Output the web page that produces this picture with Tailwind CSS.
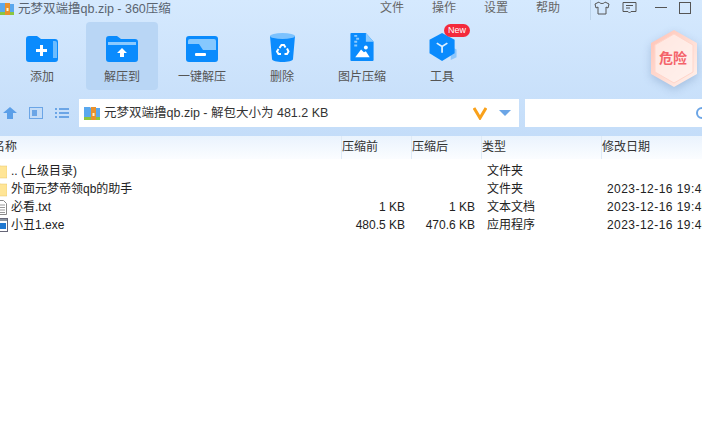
<!DOCTYPE html>
<html lang="zh">
<head>
<meta charset="utf-8">
<script src="https://cdn.jsdelivr.net/npm/@tailwindcss/browser@4"></script>
</head>
<body class="m-0 bg-white">
<div class="w-[702px] h-[433px] overflow-hidden bg-white flex flex-col font-['Liberation_Sans','Noto_Sans_CJK_SC',sans-serif] text-[12px] text-[#222]">
  <div class="h-[136px] shrink-0 bg-gradient-to-b from-[#d5e9fe] to-[#c4ddf9] flex flex-col">
    <div class="h-[20px] flex items-start">
      <svg class="ml-[-1px] mt-[1px] shrink-0" width="15" height="15" viewBox="0 0 15 15"><path d="M0 2h6l1 1h8v9H0z" fill="#5aa8ee"/><rect x="0" y="11" width="15" height="3" fill="#8cc63f"/><rect x="6" y="2" width="5" height="12" fill="#e8912d"/><rect x="7.5" y="7" width="2" height="3" fill="#fff3c8"/></svg>
      <div class="ml-[4px] mt-[1px] text-[12.5px] leading-[17px] text-[#5a6470] w-[362px] whitespace-nowrap">元梦双端撸qb.zip - 360压缩</div>
      <div class="flex gap-[28px] text-[12px] leading-[14px] text-[#666] mt-[1px]">
        <span>文件</span><span>操作</span><span>设置</span><span>帮助</span>
      </div>
      <div class="ml-[30px] w-px h-[20px] bg-[#bcd3ea]"></div>
      <svg class="ml-[3px] mt-[1px]" width="16" height="14" viewBox="0 0 16 14" fill="none" stroke="#555" stroke-width="1"><path d="M5 1 1 3l1 4 2-1v7h8V6l2 1 1-4-4-2c-1 2-5 2-6 0z"/></svg>
      <svg class="ml-[12px] mt-[1px]" width="15" height="14" viewBox="0 0 15 14" fill="none" stroke="#555" stroke-width="1"><path d="M1 1.500h13v9H9l-1.500 1.500L6 10.500H1z"/><path d="M4 4.500h7M4 7h4"/></svg>
      <div class="ml-[18px] mt-[7px] w-[12px] h-px bg-[#555]"></div>
      <div class="ml-[12px] mt-[2px] w-[12px] h-[12px] border border-[#555]"></div>
    </div>
    <div class="h-[77px] flex items-start mt-[2px] ml-[6px] gap-[8px] relative">
      <div class="w-[72px] h-[68px] rounded-[4px] flex flex-col items-center text-[#555]">
        <svg class="mt-[14px]" width="32" height="26" viewBox="0 0 32 26"><path d="M3 0h8l4 3h14a3 3 0 0 1 3 3v17a3 3 0 0 1-3 3H3a3 3 0 0 1-3-3V3a3 3 0 0 1 3-3z" fill="#0a8bfd"/><path d="M27 5h2a2 2 0 0 1 2 2v15h-4z" fill="#6cbcfe"/><path d="M14 9h3v4h4v3h-4v4h-3v-4h-4v-3h4z" fill="#fff"/></svg>
        <span class="mt-[7px] leading-[16px]">添加</span>
      </div>
      <div class="w-[72px] h-[68px] rounded-[4px] bg-[#b9d6f5] flex flex-col items-center text-[#555]">
        <svg class="mt-[14px]" width="32" height="26" viewBox="0 0 32 26"><path d="M3 0h8l4 3h14a3 3 0 0 1 3 3v17a3 3 0 0 1-3 3H3a3 3 0 0 1-3-3V3a3 3 0 0 1 3-3z" fill="#0a8bfd"/><rect x="2" y="6" width="28" height="3" fill="#8ccafe"/><path d="M16 12l5 5h-3v4h-4v-4h-3z" fill="#fff"/></svg>
        <span class="mt-[7px] leading-[16px]">解压到</span>
      </div>
      <div class="w-[72px] h-[68px] rounded-[4px] flex flex-col items-center text-[#555]">
        <svg class="mt-[14px]" width="32" height="26" viewBox="0 0 32 26"><path d="M3 0h26a3 3 0 0 1 3 3v20a3 3 0 0 1-3 3H3a3 3 0 0 1-3-3V3a3 3 0 0 1 3-3z" fill="#0a8bfd"/><path d="M4 3h24a2 2 0 0 1 2 2v9H17l-4-6H2V5a2 2 0 0 1 2-2z" fill="#86c8fe"/><rect x="9" y="17" width="11" height="3" rx="1" fill="#fff"/></svg>
        <span class="mt-[7px] leading-[16px] whitespace-nowrap">一键解压</span>
      </div>
      <div class="w-[72px] h-[68px] rounded-[4px] flex flex-col items-center text-[#555]">
        <svg class="mt-[11px]" width="25" height="29" viewBox="0 0 25 29"><path d="M0 3h25l-2 23c0 2-5 3-10.500 3S2 28 2 26z" fill="#0a8bfd"/><ellipse cx="12.500" cy="3" rx="12.500" ry="3" fill="#7cc2fe"/><g fill="none" stroke="#fff" stroke-width="2"><path d="M9.500 15l2-3h2.500l1.500 2.500"/><path d="M17 15.500l1.500 3-1.500 2.500h-2.500"/><path d="M11 21H8.500L7 18.500l1.500-2.500"/></g></svg>
        <span class="mt-[7px] leading-[16px]">删除</span>
      </div>
      <div class="w-[72px] h-[68px] rounded-[4px] flex flex-col items-center text-[#555]">
        <svg class="mt-[11px]" width="24" height="28" viewBox="0 0 24 29"><path d="M1 0h15l8 9v19a1 1 0 0 1-1 1H1a1 1 0 0 1-1-1V1a1 1 0 0 1 1-1z" fill="#0a8bfd"/><path d="M16 0l8 9h-8z" fill="#8ccafe"/><path d="M4 2h3v2H4zM6 5h3v2H6zM4 8h3v2H4zM4 12h3v2H4z" fill="#8ccafe"/><path d="M5 25l6-8 3 3 2-1 4 6z" fill="#fff"/><circle cx="16" cy="15" r="2" fill="#fff"/></svg>
        <span class="mt-[8px] leading-[16px] whitespace-nowrap">图片压缩</span>
      </div>
      <div class="w-[72px] h-[68px] rounded-[4px] flex flex-col items-center text-[#555] relative">
        <svg class="mt-[11px] ml-[3px]" width="30" height="28" viewBox="0 0 30 29"><path d="M22 14l6 3v8l-6 3z" fill="#8cc6fb"/><path d="M13 0l13 7v14l-13 8-13-8V7z" fill="#0a8bfd"/><path d="M7.500 10.500l5.500 3.500 5.500-3.500M13 14v6.500" stroke="#dff0ff" stroke-width="1.800" fill="none"/></svg>
        <span class="mt-[8px] leading-[16px]">工具</span>
        <span class="absolute left-[38px] top-[2px] w-[26px] h-[13px] rounded-full bg-[#f42a3c] text-white text-[9px] leading-[13px] text-center font-['Liberation_Sans']">New</span>
      </div>
      <svg class="absolute left-[645px] top-[8px] drop-shadow-[0_3px_4px_rgba(120,150,190,0.45)]" width="46" height="58" viewBox="0 0 46 58"><defs><linearGradient id="s" x1="0" y1="0" x2="1" y2="1"><stop offset="0" stop-color="#ffc2b4"/><stop offset="1" stop-color="#fff3ee"/></linearGradient></defs><path d="M23 0l23 13v31L23 57 0 44V13z" fill="url(#s)"/><path d="M23 4l19 11v27L23 53 4 42V15z" fill="#fff2ee" fill-opacity=".75" stroke="#ffd6cb"/></svg>
      <span class="absolute left-[653px] top-[26px] text-[14px] leading-[20px] text-[#f4636a] font-bold">危险</span>
    </div>
    <div class="h-[28px] flex items-center">
      <svg class="ml-[3px] shrink-0" width="14" height="12" viewBox="0 0 14 12"><path d="M7 0l7 6h-4v6H4V6H0z" fill="#5b9fe8"/></svg>
      <svg class="ml-[12px] shrink-0" width="14" height="12" viewBox="0 0 14 12"><rect x=".5" y=".5" width="13" height="11" fill="#c4dcf7" stroke="#6ba5e6"/><rect x="3" y="3" width="5" height="6" fill="#6ba5e6"/></svg>
      <svg class="ml-[12px] shrink-0" width="14" height="10" viewBox="0 0 14 10" fill="#6ba5e6"><path d="M0 0h2v2H0zM4 0h10v2H4zM0 4h2v2H0zM4 4h10v2H4zM0 8h2v2H0zM4 8h10v2H4z"/></svg>
      <div class="ml-[10px] w-[440px] h-[28px] bg-white flex items-center relative">
        <svg class="ml-[5px] shrink-0" width="16" height="15" viewBox="0 0 16 15"><path d="M0 1h6l1 1h9v10H0z" fill="#5aa8ee"/><rect x="0" y="11" width="16" height="3" fill="#8cc63f"/><rect x="7" y="1" width="5" height="13" fill="#e8912d"/><rect x="8.500" y="7" width="2" height="3" fill="#fff3c8"/></svg>
        <span class="ml-[4px] text-[12.500px] text-[#333] whitespace-nowrap">元梦双端撸qb.zip - 解包大小为 481.2 KB</span>
        <svg class="absolute left-[394px] top-[8px]" width="14" height="13" viewBox="0 0 14 13"><path d="M1 1l6 10 6-10" fill="none" stroke="#f9a11b" stroke-width="3"/></svg>
        <svg class="absolute left-[420px] top-[11px]" width="12" height="6" viewBox="0 0 12 6"><path d="M0 0h12L6 6z" fill="#6ba5e6"/></svg>
      </div>
      <div class="ml-[6px] flex-1 h-[28px] bg-white relative">
        <svg class="absolute left-[170px] top-[7px]" width="14" height="14" viewBox="0 0 14 14"><circle cx="7" cy="7" r="5" fill="none" stroke="#6ba5e6" stroke-width="2"/></svg>
      </div>
    </div>
  </div>
  <div class="h-[23px] shrink-0 bg-gradient-to-b from-[#eaf3fd] to-[#fbfdff] flex items-stretch text-[12px] leading-[23px] text-[#333]">
    <span class="ml-[-7px] w-[348px] shrink-0">名称</span>
    <span class="w-[70px] shrink-0 border-l border-[#dfeaf6]">压缩前</span>
    <span class="w-[70px] shrink-0 border-l border-[#dfeaf6]">压缩后</span>
    <span class="w-[120px] shrink-0 border-l border-[#dfeaf6]">类型</span>
    <span class="flex-1 border-l border-[#dfeaf6]">修改日期</span>
  </div>
  <div class="mt-[3px] flex flex-col text-[12px] leading-[18px] text-[#222]">
    <div class="h-[18px] flex items-center">
      <svg class="ml-[-7px] shrink-0" width="14" height="16" viewBox="0 0 14 16"><path d="M0 1h6l1 2h7v12H0z" fill="#ffe596" stroke="#e6c468" stroke-width=".5"/></svg>
      <span class="ml-[4px] w-[328px] shrink-0 whitespace-nowrap">.. (上级目录)</span>
      <span class="w-[66px] shrink-0"></span><span class="w-[70px] shrink-0"></span>
      <span class="ml-[12px] w-[120px] shrink-0">文件夹</span>
    </div>
    <div class="h-[18px] flex items-center">
      <svg class="ml-[-7px] shrink-0" width="14" height="16" viewBox="0 0 14 16"><path d="M0 1h6l1 2h7v12H0z" fill="#ffe596" stroke="#e6c468" stroke-width=".5"/></svg>
      <span class="ml-[4px] w-[328px] shrink-0 whitespace-nowrap">外面元梦帝领qb的助手</span>
      <span class="w-[66px] shrink-0"></span><span class="w-[70px] shrink-0"></span>
      <span class="ml-[12px] w-[120px] shrink-0">文件夹</span><span class="shrink-0 whitespace-nowrap tracking-[0.45px]">2023-12-16 19:40</span>
    </div>
    <div class="h-[18px] flex items-center">
      <svg class="ml-[-4px] shrink-0" width="11" height="15" viewBox="0 0 11 15"><path d="M.5.500h7l3 3v11H.5z" fill="#fff" stroke="#888"/><path d="M2 5h7M2 7.500h7M2 10h7M2 12.500h7" stroke="#999"/></svg>
      <span class="ml-[4px] w-[328px] shrink-0 whitespace-nowrap">必看.txt</span>
      <span class="w-[66px] shrink-0 text-right whitespace-nowrap">1 KB</span><span class="w-[70px] shrink-0 text-right whitespace-nowrap">1 KB</span>
      <span class="ml-[12px] w-[120px] shrink-0">文本文档</span><span class="shrink-0 whitespace-nowrap tracking-[0.45px]">2023-12-16 19:40</span>
    </div>
    <div class="h-[18px] flex items-center">
      <svg class="ml-[-8px] shrink-0" width="16" height="14" viewBox="0 0 16 14"><rect x=".5" y=".5" width="15" height="13" fill="#fff" stroke="#667"/><rect x="1" y="1" width="14" height="2" fill="#8a94a0"/><rect x="8" y="5" width="6" height="6" fill="#1f78d1"/></svg>
      <span class="ml-[3px] w-[328px] shrink-0 whitespace-nowrap">小丑1.exe</span>
      <span class="w-[66px] shrink-0 text-right whitespace-nowrap">480.5 KB</span><span class="w-[70px] shrink-0 text-right whitespace-nowrap">470.6 KB</span>
      <span class="ml-[12px] w-[120px] shrink-0">应用程序</span><span class="shrink-0 whitespace-nowrap tracking-[0.45px]">2023-12-16 19:40</span>
    </div>
  </div>
</div>
</body>
</html>
